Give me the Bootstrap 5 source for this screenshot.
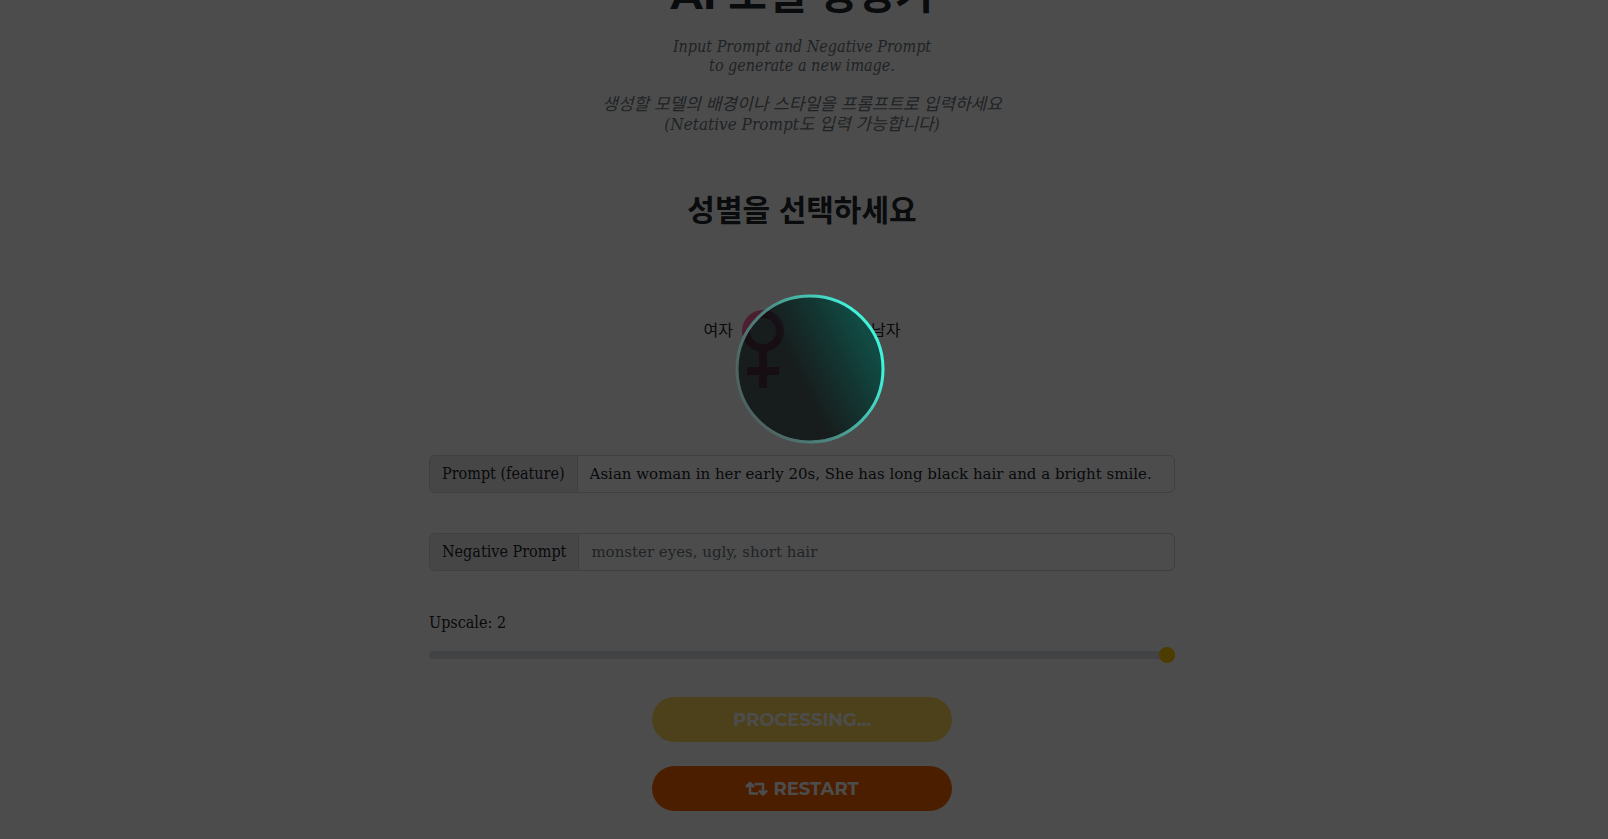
<!DOCTYPE html>
<html lang="ko">
<head>
<meta charset="utf-8">
<meta name="viewport" content="width=device-width, initial-scale=1">
<title>AI 모델 생성기</title>
<link href="https://cdn.jsdelivr.net/npm/bootstrap@5.3.0/dist/css/bootstrap.min.css" rel="stylesheet">
<style>
body{font-family:"Roboto Slab","DejaVu Serif Condensed","Noto Sans CJK KR",serif;color:#212529;background:#fff}
.studio{padding-right:4px;margin-top:-30px}
.studio h1,.studio h2{font-family:Montserrat,"Open Sans","Noto Sans CJK KR",sans-serif;font-weight:700}
.studio h1{font-size:42px;line-height:48px;margin-bottom:19px}
.studio h2{font-size:30px;line-height:42px;margin:56px 0 0}
.intro{font-style:italic;line-height:19px;color:#6c757d;margin-bottom:19px}
.intro-ko{font-size:17px;line-height:20px}
.panel{max-width:746px}
.gender{height:42px;margin-top:78px;margin-bottom:103px;gap:9px}
.gender-switch{width:120px;height:42px;border-radius:21px;background:#fff;position:relative}
.gender-switch input{position:absolute;inset:0;width:100%;height:100%;opacity:0;margin:0}
.gender-switch svg{position:absolute;left:0;top:0}
.input-group{height:38px;margin-bottom:40px}
.input-group-text{background:#e9ecef;border-color:#ced4da;color:#212529}
.input-group .form-control{font-family:"Roboto Slab","DejaVu Serif","Noto Sans CJK KR",serif;font-size:15px;border-color:#ced4da;color:#212529}
.input-group .form-control::placeholder{color:#6c757d}
.form-range{display:block;height:24px}
.form-range::-webkit-slider-runnable-track{background:#dee2e6}
.form-range::-webkit-slider-thumb{background:#ffc800}
.actions{margin-top:30px;gap:24px}
.action{width:300px;height:45px;border-radius:23px;border:0;padding:0;color:#fff!important;font:700 18px/24px Montserrat,Inter,sans-serif}
.action-main{background:#ffc800!important;opacity:.65}
.action-restart{background:#ff6400!important}
.action svg{vertical-align:-2px}
.shade{position:fixed;inset:0;background:rgba(0,0,0,.7);z-index:10}
.orb{position:absolute;left:calc(50% + 6px);top:calc(50% - 51px);transform:translate(-50%,-50%)}
</style>
</head>
<body class="overflow-hidden">
<main class="studio text-center">
<h1>AI 모델 생성기</h1>
<p class="intro">Input Prompt and Negative Prompt<br>to generate a new image.</p>
<p class="intro intro-ko">생성할 모델의 배경이나 스타일을 프롬프트로 입력하세요<br>(Netative Prompt도 입력 가능합니다)</p>
<h2>성별을 선택하세요</h2>
<form class="panel mx-auto">
<div class="gender d-flex justify-content-center align-items-center">
<span>여자</span>
<label class="gender-switch"><input type="checkbox" role="switch" aria-label="성별">
<svg width="42" height="80" viewBox="0 0 42 80" fill="none" stroke="#fa64a0" stroke-width="8"><circle cx="21" cy="21" r="17"/><path d="M21 38v40M5 61h32"/></svg></label>
<span>남자</span>
</div>
<div class="input-group"><label class="input-group-text" for="prompt">Prompt (feature)</label><input class="form-control" id="prompt" type="text" value="Asian woman in her early 20s, She has long black hair and a bright smile."></div>
<div class="input-group"><label class="input-group-text" for="negative">Negative Prompt</label><input class="form-control" id="negative" type="text" placeholder="monster eyes, ugly, short hair"></div>
<label class="form-label d-block text-start" for="upscale">Upscale: 2</label>
<input class="form-range" id="upscale" type="range" min="1" max="2" value="2">
<div class="actions d-flex flex-column align-items-center">
<button class="btn action action-main" type="button" disabled>PROCESSING...</button>
<button class="btn action action-restart" type="button"><svg width="23" height="16" viewBox="0 0 23 16" fill="none" stroke="#fff" stroke-width="2.6" stroke-linejoin="round"><path d="M13 12.5H5V2.5M1 6l4-4 4 4M9.5 3H18v10M14 9.500l4 4 4-4"/></svg> RESTART</button>
</div>
</form>
</main>
<div class="shade" role="status" aria-label="Loading">
<svg class="orb" width="150" height="150" viewBox="0 0 150 150"><defs><linearGradient id="fill" x1=".1" y1=".7" x2=".9" y2=".3"><stop offset=".38" stop-color="#000707" stop-opacity=".7"/><stop offset="1" stop-color="#004a41" stop-opacity=".78"/></linearGradient><linearGradient id="rim" x1=".1" y1=".7" x2=".9" y2=".3"><stop offset="0" stop-color="#4d6462"/><stop offset=".4" stop-color="#4b8880"/><stop offset="1" stop-color="#40f4dc"/></linearGradient></defs><circle cx="75" cy="75" r="72" fill="url(#fill)"/><circle cx="75" cy="75" r="73" fill="none" stroke="url(#rim)" stroke-width="3"/></svg>
</div>
<script src="https://cdn.jsdelivr.net/npm/bootstrap@5.3.0/dist/js/bootstrap.bundle.min.js"></script>
</body>
</html>
